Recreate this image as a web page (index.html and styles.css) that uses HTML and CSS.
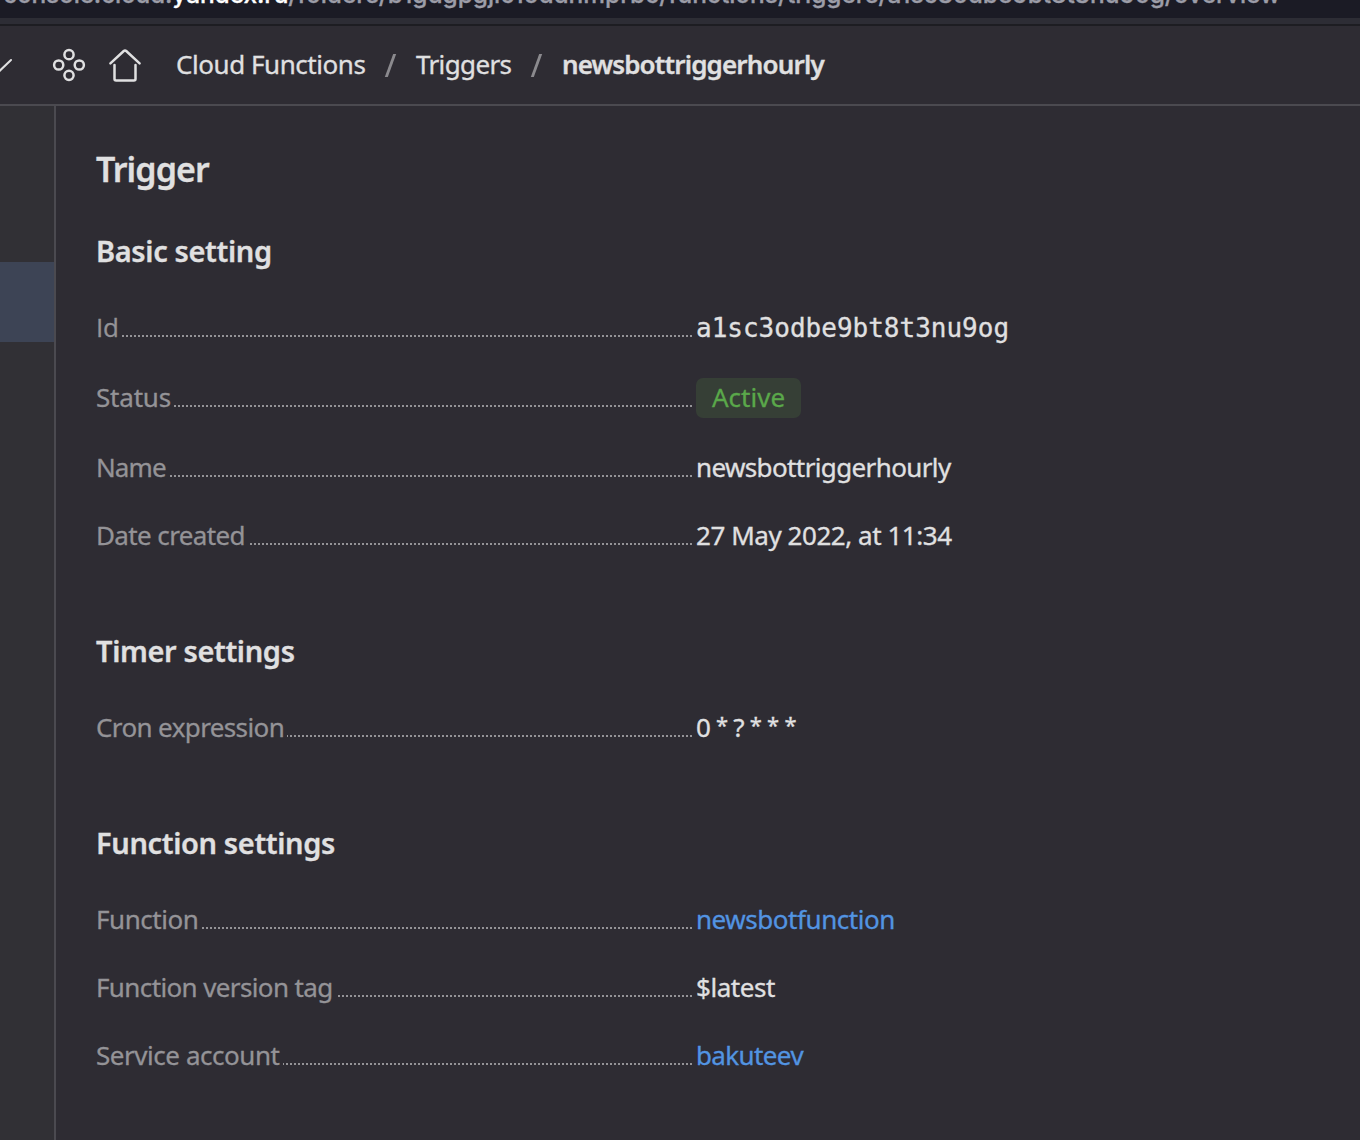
FILE: index.html
```
<!DOCTYPE html>
<html lang="en">
<head>
<meta charset="utf-8">
<title>newsbottriggerhourly</title>
<link rel="stylesheet" href="styles.css">
</head>
<body>
<div class="browser-bar"><span class="url"><span class="url-sub">console.cloud.</span><span class="url-host">yandex.ru</span>/folders/b1gdgpgjlc1oddnmprbc/functions/triggers/a1sc3odbe9bt8t3nu9og/overview</span></div>
<header class="header">
  <svg class="chevron" width="14" height="20" viewBox="0 0 14 20"><path d="M-10 5 L0 15.5 L11 5" /></svg>
  <svg class="icon services" width="34" height="34" viewBox="0 0 34 34"><circle cx="17" cy="6.7" r="4.6"/><circle cx="6.7" cy="17" r="4.6"/><circle cx="27.3" cy="17" r="4.6"/><circle cx="17" cy="27.3" r="4.6"/></svg>
  <svg class="icon home" width="34" height="34" viewBox="0 0 34 34"><path d="M2.4 15.3 L15.8 3 Q17 1.9 18.2 3 L31.6 15.3 M6.5 17 V31 Q6.5 32.4 8.1 32.4 H25.9 Q27.5 32.4 27.5 31 V17"/></svg>
  <nav class="crumbs"><span class="tight-s">Cloud Functions</span><i class="sep"></i><span class="tight-m">Triggers</span><i class="sep"></i><span class="current">newsbottriggerhourly</span></nav>
</header>
<div class="body">
  <aside class="side"><div class="side-active"></div></aside>
  <main class="main">
    <h1 class="title">Trigger</h1>
    <h2 class="section">Basic setting</h2>
    <div class="rows">
      <div class="row"><div class="key"><span class="id-label">Id</span><i class="dots"></i></div><span class="mono">a1sc3odbe9bt8t3nu9og</span></div>
      <div class="row"><div class="key"><span class="tight-xs">Status</span><i class="dots"></i></div><span class="badge">Active</span></div>
      <div class="row"><div class="key"><span class="tight-l">Name</span><i class="dots"></i></div><span class="tight-m">newsbottriggerhourly</span></div>
      <div class="row"><div class="key"><span class="tight-m">Date created</span><i class="dots"></i></div><span class="tight-s">27 May 2022, at 11:34</span></div>
    </div>
    <h2 class="section">Timer settings</h2>
    <div class="rows">
      <div class="row"><div class="key"><span class="tight-m">Cron expression</span><i class="dots"></i></div><span class="cron">0 <small>*</small> ? <small>*</small> <small>*</small> <small>*</small></span></div>
    </div>
    <h2 class="section">Function settings</h2>
    <div class="rows">
      <div class="row"><div class="key"><span class="tight-s">Function</span><i class="dots"></i></div><span class="link tight-s">newsbotfunction</span></div>
      <div class="row"><div class="key"><span class="tight-m">Function version tag</span><i class="dots"></i></div><span class="tight-s">$latest</span></div>
      <div class="row"><div class="key"><span class="tight-s">Service account</span><i class="dots"></i></div><span class="link tight-m">bakuteev</span></div>
    </div>
  </main>
</div>
</body>
</html>
```
FILE: styles.css
```
* { box-sizing: border-box; }
body { margin: 0; height: 1140px; overflow: hidden; background: #2e2c33; color: #e0e0e1; font: 26px/36px "Noto Sans", sans-serif; -webkit-text-stroke: 0.3px; display: flex; flex-direction: column; }
.browser-bar { height: 26px; flex: none; background: #1b1b25; border-bottom: 2px solid #1d1d22; box-shadow: inset 0 -6px #2d2d35; display: flex; align-items: flex-start; overflow: hidden; color: #9c9da8; }
.url { font: 500 24.5px/30px Inter, sans-serif; letter-spacing: -0.04px; white-space: nowrap; margin: -21px 0 0 3px; }
.url-sub { letter-spacing: -0.2px; }
.url-host { color: #fff; letter-spacing: -0.1px; }
.header { height: 80px; flex: none; border-bottom: 2px solid #4b4a50; display: flex; align-items: center; }
.chevron, .icon { flex: none; fill: none; stroke: #e0e0e1; stroke-width: 2.5; stroke-linecap: round; }
.chevron { stroke-width: 2; }
.services { margin-left: 38px; }
.home { margin-left: 22px; }
.crumbs { display: flex; align-items: center; margin: -2px 0 0 34px; }
.sep { width: 2.5px; height: 23px; background: #8b8a8e; transform: skewX(-20deg); margin: 2px 24px 0; }
.current { font-weight: 600; letter-spacing: -0.85px; }
.tight-xs { letter-spacing: -0.2px; }
.tight-s { letter-spacing: -0.45px; }
.tight-m { letter-spacing: -0.62px; }
.tight-l { letter-spacing: -0.9px; }
.id-label { font-family: "Open Sans", sans-serif; letter-spacing: -0.2px; }
.cron { word-spacing: -1.6px; }
.cron small { font-size: 22px; line-height: 1; vertical-align: 4px; }
.body { flex: 1; min-height: 0; display: flex; }
.side { width: 56px; border-right: 2px solid #4b4a50; background: #313035; padding-top: 156px; }
.side-active { height: 80px; background: #3d4455; }
.main { padding: 43px 40px 0; }
.title, .section { margin: 0; font-weight: 600; }
.title { font-size: 34px; line-height: 40px; letter-spacing: -0.9px; margin-bottom: 44px; }
.section { font-size: 29px; line-height: 36px; letter-spacing: -0.36px; margin-bottom: 40px; }
.rows { display: flex; flex-direction: column; gap: 32px; margin-bottom: 80px; }
.rows:last-child { margin-bottom: 0; }
.row { display: flex; align-items: center; white-space: nowrap; }
.key { width: 600px; display: flex; color: #949397; padding-right: 4px; }
.dots { flex: 1; height: 2px; margin: 26px 0 0 3px; background: repeating-linear-gradient(to left, #949397 0 2px, transparent 2px 4px); }
.mono { font-family: "DejaVu Sans Mono", monospace; padding-top: 1px; margin-bottom: -1px; }
.badge { height: 40px; line-height: 38px; padding: 0 16px; border-radius: 7px; background: #363f36; color: #5aa84a; margin: 1px 0 -1px; }
.link { color: #5294e2; }
```
